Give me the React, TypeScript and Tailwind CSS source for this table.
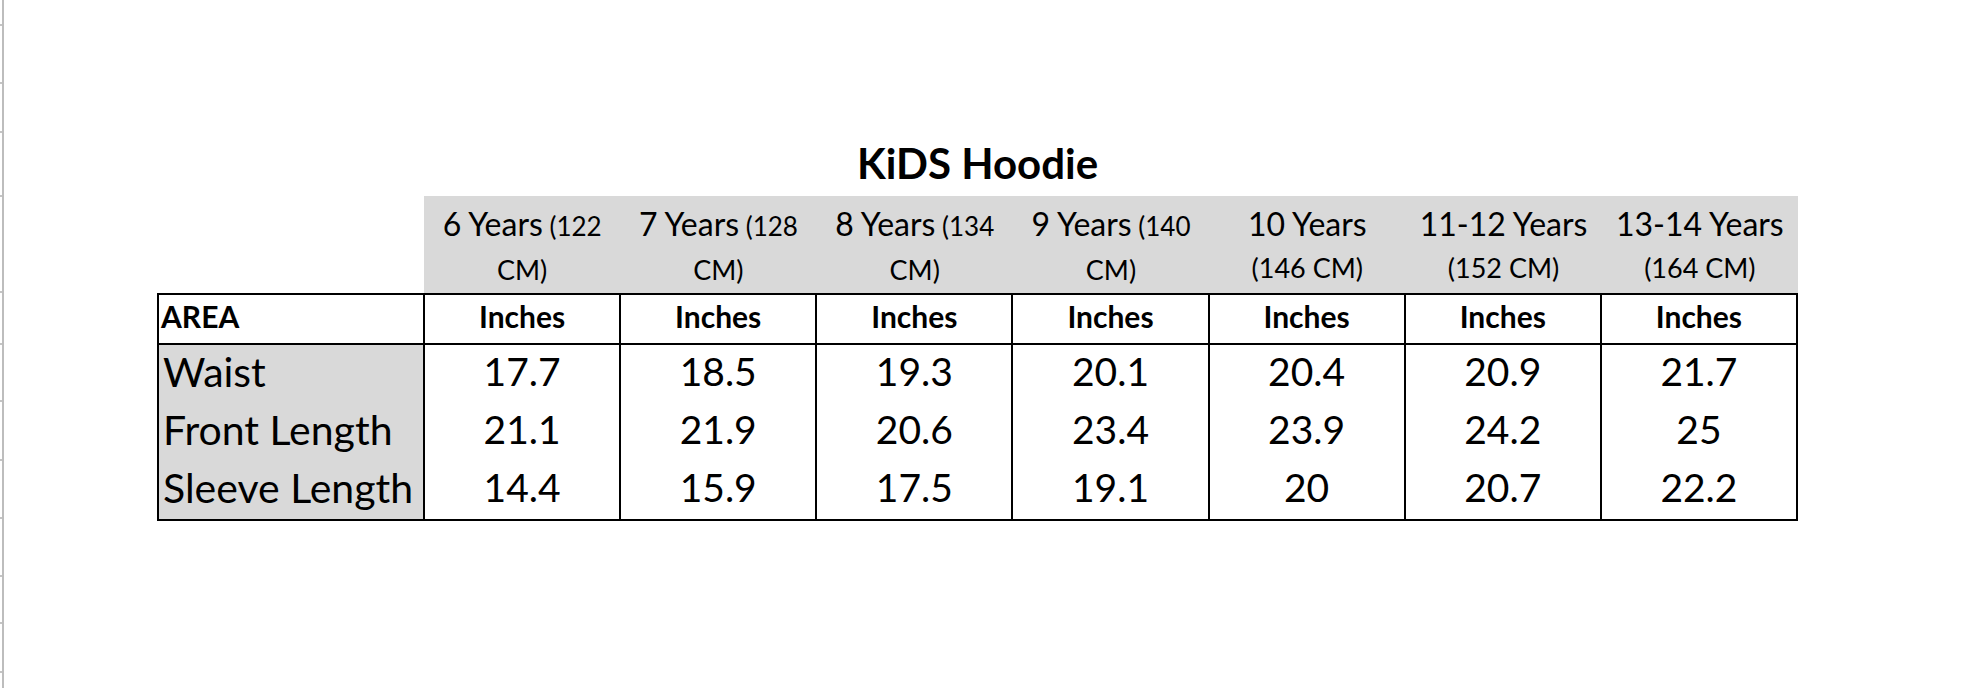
const TICKS = [26, 58, 49, 64, 96, 52, 57, 59, 58, 58, 47, 49];

const SIZES = [
  { big: "6 Years", small: " (122", second: "CM)" },
  { big: "7 Years", small: " (128", second: "CM)" },
  { big: "8 Years", small: " (134", second: "CM)" },
  { big: "9 Years", small: " (140", second: "CM)" },
  { big: "10 Years", small: "", second: "(146 CM)" },
  { big: "11-12 Years", small: "", second: "(152 CM)" },
  { big: "13-14 Years", small: "", second: "(164 CM)" },
];

const ROWS = [
  { area: "Waist", values: ["17.7", "18.5", "19.3", "20.1", "20.4", "20.9", "21.7"] },
  { area: "Front Length", values: ["21.1", "21.9", "20.6", "23.4", "23.9", "24.2", "25"] },
  { area: "Sleeve Length", values: ["14.4", "15.9", "17.5", "19.1", "20", "20.7", "22.2"] },
];

function Gutter() {
  return (
    <div className="flex h-full w-[4px] shrink-0">
      {/* row markers */}
      <div className="flex w-[2px] flex-col">
        {TICKS.map((h, i) => (
          <div key={i} className="border-b-2 border-[#c4c4c4]" style={{ height: h }} />
        ))}
      </div>
      <div className="h-full w-[2px] bg-[#bdbdbd]" />
    </div>
  );
}

export default function App() {
  return (
    <div className="flex h-[688px] w-[1986px] overflow-hidden bg-white font-['Lato',sans-serif] text-black">
      <Gutter />
      <div className="flex-1 pl-[153px] pt-[138px]">
        <div className="w-[1641px]">
          <h1 className="h-[58px] text-center text-[42px] font-bold leading-[50px]">KiDS Hoodie</h1>

          {/* size header */}
          <div className="flex h-[97px]">
            <div className="w-[267px] shrink-0" />
            <div className="grid flex-1 grid-cols-7 bg-[#d9d9d9]">
              {SIZES.map((s) => (
                <div key={s.big} className="flex flex-col items-center pt-[8px] whitespace-nowrap">
                  <div className="text-[32px] leading-[40px]">
                    {s.big}
                    {s.small && <span className="text-[26px]">{s.small}</span>}
                  </div>
                  <div className="mt-[9px] text-[27px] leading-[30px]">{s.second}</div>
                </div>
              ))}
            </div>
          </div>

          {/* table */}
          <div className="border-2 border-black">
            <div className="grid h-[50px] grid-cols-[264px_repeat(7,1fr)] border-b-2 border-black text-[30px] font-bold leading-[42px]">
              <div className="pl-[2px]">AREA</div>
              {SIZES.map((s) => (
                <div key={s.big} className="border-l-2 border-black text-center">
                  Inches
                </div>
              ))}
            </div>
            {ROWS.map((r) => (
              <div key={r.area} className="grid h-[58px] grid-cols-[264px_repeat(7,1fr)] text-[39px] leading-[53px]">
                <div className="bg-[#d9d9d9] pl-[4px] text-[41px] whitespace-nowrap">{r.area}</div>
                {r.values.map((v, i) => (
                  <div key={i} className="border-l-2 border-black text-center">
                    {v}
                  </div>
                ))}
              </div>
            ))}
          </div>
        </div>
      </div>
    </div>
  );
}
